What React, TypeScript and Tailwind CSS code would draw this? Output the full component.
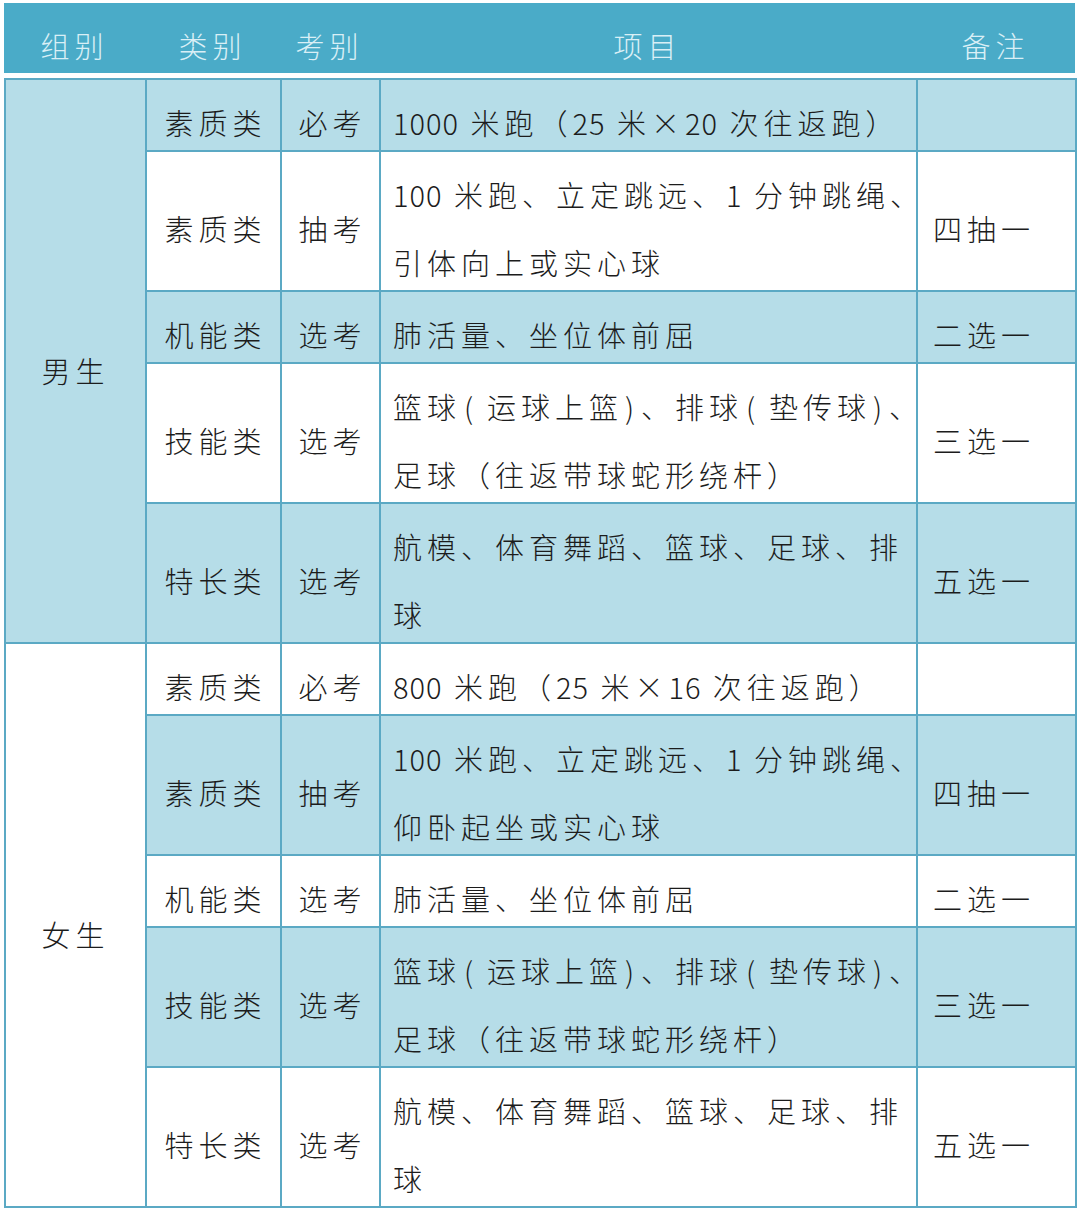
import React from "react"

const BLUE = "bg-[#b6dde8]"
const WHITE = "bg-white"

interface Row {
  kind: string
  exam: string
  lines: string[]
  note: string
  bg: string
  tall: boolean
}

interface Group {
  name: string
  bg: string
  rows: Row[]
}

// "(" / ")" = squeezed parens, "（" / "）" = full width
const skill = ["篮球(运球上篮)、排球(垫传球)、", "足球（往返带球蛇形绕杆）"]
const special = ["航模、体育舞蹈、篮球、足球、排", "球"]

const groups: Group[] = [
  {
    name: "男生",
    bg: BLUE,
    rows: [
      { kind: "素质类", exam: "必考", lines: ["1000 米跑（25 米×20 次往返跑）"], note: "", bg: BLUE, tall: false },
      { kind: "素质类", exam: "抽考", lines: ["100 米跑、立定跳远、1 分钟跳绳、", "引体向上或实心球"], note: "四抽一", bg: WHITE, tall: true },
      { kind: "机能类", exam: "选考", lines: ["肺活量、坐位体前屈"], note: "二选一", bg: BLUE, tall: false },
      { kind: "技能类", exam: "选考", lines: skill, note: "三选一", bg: WHITE, tall: true },
      { kind: "特长类", exam: "选考", lines: special, note: "五选一", bg: BLUE, tall: true },
    ],
  },
  {
    name: "女生",
    bg: WHITE,
    rows: [
      { kind: "素质类", exam: "必考", lines: ["800 米跑（25 米×16 次往返跑）"], note: "", bg: WHITE, tall: false },
      { kind: "素质类", exam: "抽考", lines: ["100 米跑、立定跳远、1 分钟跳绳、", "仰卧起坐或实心球"], note: "四抽一", bg: BLUE, tall: true },
      { kind: "机能类", exam: "选考", lines: ["肺活量、坐位体前屈"], note: "二选一", bg: WHITE, tall: false },
      { kind: "技能类", exam: "选考", lines: skill, note: "三选一", bg: BLUE, tall: true },
      { kind: "特长类", exam: "选考", lines: special, note: "五选一", bg: WHITE, tall: true },
    ],
  },
]

function Line({ text }: { text: string }) {
  const parts = text.split(/(\d+|\(|\))/).filter((p) => p !== "")
  return (
    <div className="whitespace-nowrap">
      {parts.map((p, i) => {
        if (p === "(") return <span key={i} className="inline-block w-[26px] pl-[3px] tracking-normal">(</span>
        if (p === ")") return <span key={i} className="inline-block w-[18px] pl-[2px] tracking-normal">)</span>
        if (/^\d+$/.test(p)) return <span key={i} className="tracking-[1px]">{p}</span>
        return <span key={i}>{p}</span>
      })}
    </div>
  )
}

const cell = "border-2 border-[#5ba9c4] p-0 align-top"

export default function App() {
  return (
    <div
      className="bg-white w-[1080px] h-[1211px] pl-[4px] pt-[3px] text-[#1c1c1c] font-light"
      style={{ fontFamily: '"Noto Sans CJK SC", sans-serif' }}
    >
      <div className="flex w-[1071px] h-[70px] bg-[#4aabc8] text-[#d9eff6] text-[29px] tracking-[5px] items-center pt-[16px]">
        <div className="w-[141px] text-center">组别</div>
        <div className="w-[135px] text-center">类别</div>
        <div className="w-[99px] text-center">考别</div>
        <div className="w-[537px] text-center">项目</div>
        <div className="w-[159px] text-center">备注</div>
      </div>

      <table className="mt-[5px] border-collapse table-fixed w-[1071px] text-[29px] tracking-[5px]">
        <colgroup>
          <col className="w-[141px]" />
          <col className="w-[135px]" />
          <col className="w-[99px]" />
          <col className="w-[537px]" />
          <col className="w-[159px]" />
        </colgroup>
        <tbody>
          {groups.map((g) =>
            g.rows.map((r, i) => {
              const h = r.tall ? "h-[138px]" : "h-[70px]"
              return (
                <tr key={g.name + i}>
                  {i === 0 && (
                    <td rowSpan={g.rows.length} className={`${cell} ${g.bg} !align-middle`}>
                      <div className="text-center pt-[20px]">{g.name}</div>
                    </td>
                  )}
                  <td className={`${cell} ${r.bg}`}>
                    <div className={`${h} flex items-center justify-center pt-[16px] pl-[4px]`}>{r.kind}</div>
                  </td>
                  <td className={`${cell} ${r.bg}`}>
                    <div className={`${h} flex items-center justify-center pt-[16px] pl-[4px]`}>{r.exam}</div>
                  </td>
                  <td className={`${cell} ${r.bg}`}>
                    <div className={`${h} pl-[12px] pt-[8px] leading-[68px] overflow-visible`}>
                      {r.lines.map((l) => (
                        <Line key={l} text={l} />
                      ))}
                    </div>
                  </td>
                  <td className={`${cell} ${r.bg}`}>
                    <div className={`${h} flex items-center pl-[15px] pt-[16px]`}>{r.note}</div>
                  </td>
                </tr>
              )
            })
          )}
        </tbody>
      </table>
    </div>
  )
}
